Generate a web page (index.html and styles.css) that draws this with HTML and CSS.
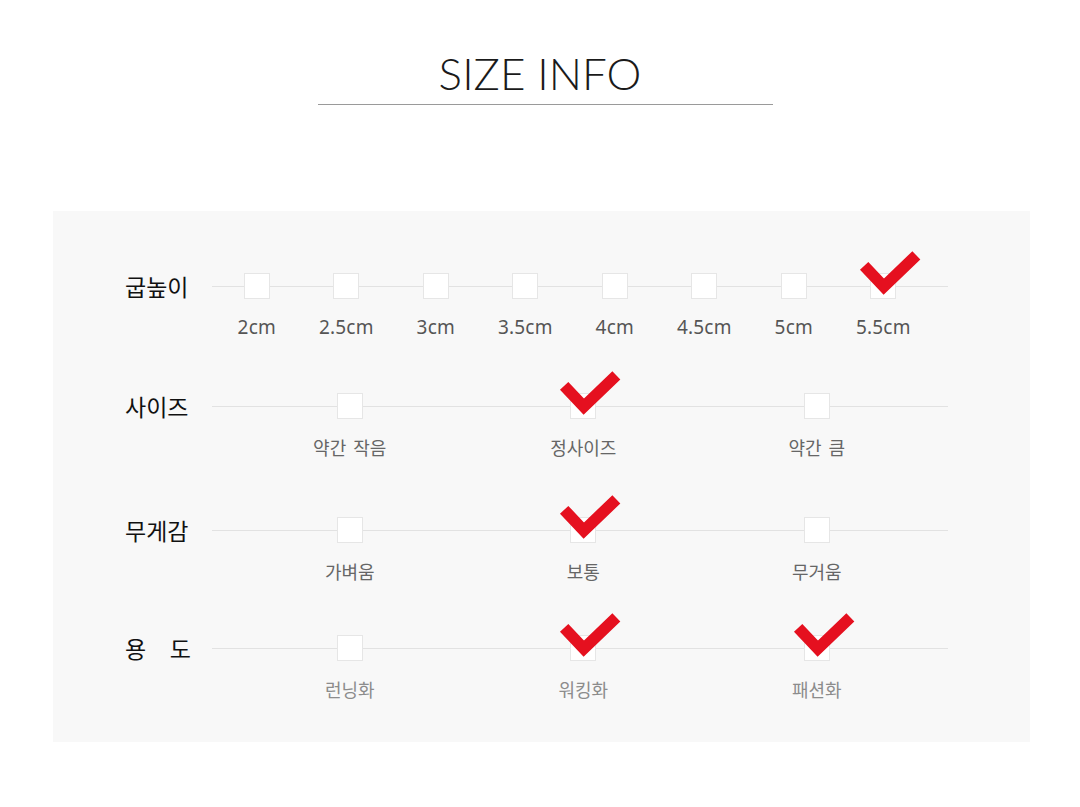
FILE: index.html
```html
<!DOCTYPE html>
<html lang="ko">
<head>
<meta charset="utf-8">
<title>SIZE INFO</title>
<link rel="stylesheet" href="styles.css">
</head>
<body>
<header class="head">
  <h1 class="title">SIZE INFO</h1>
  <div class="rule"></div>
</header>

<section class="panel">
  <div class="row row-heel">
    <div class="label">굽높이</div>
    <div class="track">
      <div class="opts opts-8">
        <div class="opt"><span class="box"></span><span class="txt">2cm</span></div>
        <div class="opt"><span class="box"></span><span class="txt">2.5cm</span></div>
        <div class="opt"><span class="box"></span><span class="txt">3cm</span></div>
        <div class="opt"><span class="box"></span><span class="txt">3.5cm</span></div>
        <div class="opt"><span class="box"></span><span class="txt">4cm</span></div>
        <div class="opt"><span class="box"></span><span class="txt">4.5cm</span></div>
        <div class="opt"><span class="box"></span><span class="txt">5cm</span></div>
        <div class="opt"><span class="box checked"><svg class="check" viewBox="0 0 64 50" width="64" height="50"><polyline points="7.15,19.85 26.8,40.6 59.35,9.35"/></svg></span><span class="txt">5.5cm</span></div>
      </div>
    </div>
  </div>

  <div class="row row-size">
    <div class="label">사이즈</div>
    <div class="track">
      <div class="opts opts-3">
        <div class="opt"><span class="box"></span><span class="txt ko">약간 작음</span></div>
        <div class="opt"><span class="box checked"><svg class="check" viewBox="0 0 64 50" width="64" height="50"><polyline points="7.15,19.85 26.8,40.6 59.35,9.35"/></svg></span><span class="txt ko">정사이즈</span></div>
        <div class="opt"><span class="box"></span><span class="txt ko">약간 큼</span></div>
      </div>
    </div>
  </div>

  <div class="row row-weight">
    <div class="label">무게감</div>
    <div class="track">
      <div class="opts opts-3">
        <div class="opt"><span class="box"></span><span class="txt ko">가벼움</span></div>
        <div class="opt"><span class="box checked"><svg class="check" viewBox="0 0 64 50" width="64" height="50"><polyline points="7.15,19.85 26.8,40.6 59.35,9.35"/></svg></span><span class="txt ko">보통</span></div>
        <div class="opt"><span class="box"></span><span class="txt ko">무거움</span></div>
      </div>
    </div>
  </div>

  <div class="row row-use">
    <div class="label label-split"><span>용</span><span>도</span></div>
    <div class="track">
      <div class="opts opts-3">
        <div class="opt"><span class="box"></span><span class="txt ko light">런닝화</span></div>
        <div class="opt"><span class="box checked"><svg class="check" viewBox="0 0 64 50" width="64" height="50"><polyline points="7.15,19.85 26.8,40.6 59.35,9.35"/></svg></span><span class="txt ko light">워킹화</span></div>
        <div class="opt"><span class="box checked"><svg class="check" viewBox="0 0 64 50" width="64" height="50"><polyline points="7.15,19.85 26.8,40.6 59.35,9.35"/></svg></span><span class="txt ko light">패션화</span></div>
      </div>
    </div>
  </div>
</section>
</body>
</html>
```

FILE: styles.css
```css
html, body {
  margin: 0;
  padding: 0;
  background: #ffffff;
}

body {
  width: 1080px;
  font-family: "Noto Sans", "Noto Sans CJK KR", sans-serif;
  color: #111;
}

.head {
  padding-top: 47px;
}

.title {
  margin: 0;
  text-align: center;
  font-family: "Lato", "Liberation Sans", sans-serif;
  font-weight: 300;
  font-size: 44px;
  line-height: 53px;
  color: #1a1a1a;
  letter-spacing: 0;
}

.rule {
  margin: 4px 0 0 318px;
  width: 455px;
  height: 1px;
  background: #9a9a9a;
}

.panel {
  box-sizing: border-box;
  margin: 106px 0 0 53px;
  width: 977px;
  height: 531px;
  background: #f8f8f8;
  padding: 62px 0 0 72px;
}

.row {
  display: flex;
  align-items: flex-start;
}

.row-heel { height: 120px; }
.row-size { height: 124px; }
.row-weight { height: 118px; }

.label {
  width: 87px;
  height: 26px;
  line-height: 26px;
  font-family: "Noto Sans CJK KR", sans-serif;
  font-size: 23px;
  color: #111;
  white-space: nowrap;
}

.label-split {
  display: flex;
  justify-content: space-between;
  width: 66px;
  margin-right: 21px;
}

.track {
  position: relative;
  width: 736px;
}

.track::before {
  content: "";
  position: absolute;
  left: 0;
  right: 0;
  top: 13px;
  height: 1px;
  background: #e2e2e2;
}

.opts {
  position: relative;
  display: grid;
}

.opts-8 {
  grid-template-columns: repeat(8, 89.5px);
}

.opts-3 {
  grid-template-columns: repeat(3, 233.5px);
  padding-left: 21px;
}

.opt {
  display: flex;
  flex-direction: column;
  align-items: center;
}

.box {
  position: relative;
  box-sizing: border-box;
  display: block;
  width: 26px;
  height: 26px;
  background: #ffffff;
  border: 1px solid #e6e6e6;
}

.check {
  position: absolute;
  left: -14px;
  top: -28px;
  overflow: visible;
  z-index: 2;
}

.check polyline {
  fill: none;
  stroke: #e5101f;
  stroke-width: 11.5;
  stroke-linejoin: miter;
  stroke-miterlimit: 4;
  stroke-linecap: butt;
}

.txt {
  margin-top: 16px;
  font-size: 19px;
  line-height: 24px;
  color: #555;
  white-space: nowrap;
  letter-spacing: 0.2px;
}

.txt.ko {
  font-family: "Noto Sans CJK KR", sans-serif;
  font-size: 18px;
  color: #666;
  word-spacing: 2px;
  letter-spacing: 0;
}

.txt.light {
  color: #8c8c8c;
}
```
